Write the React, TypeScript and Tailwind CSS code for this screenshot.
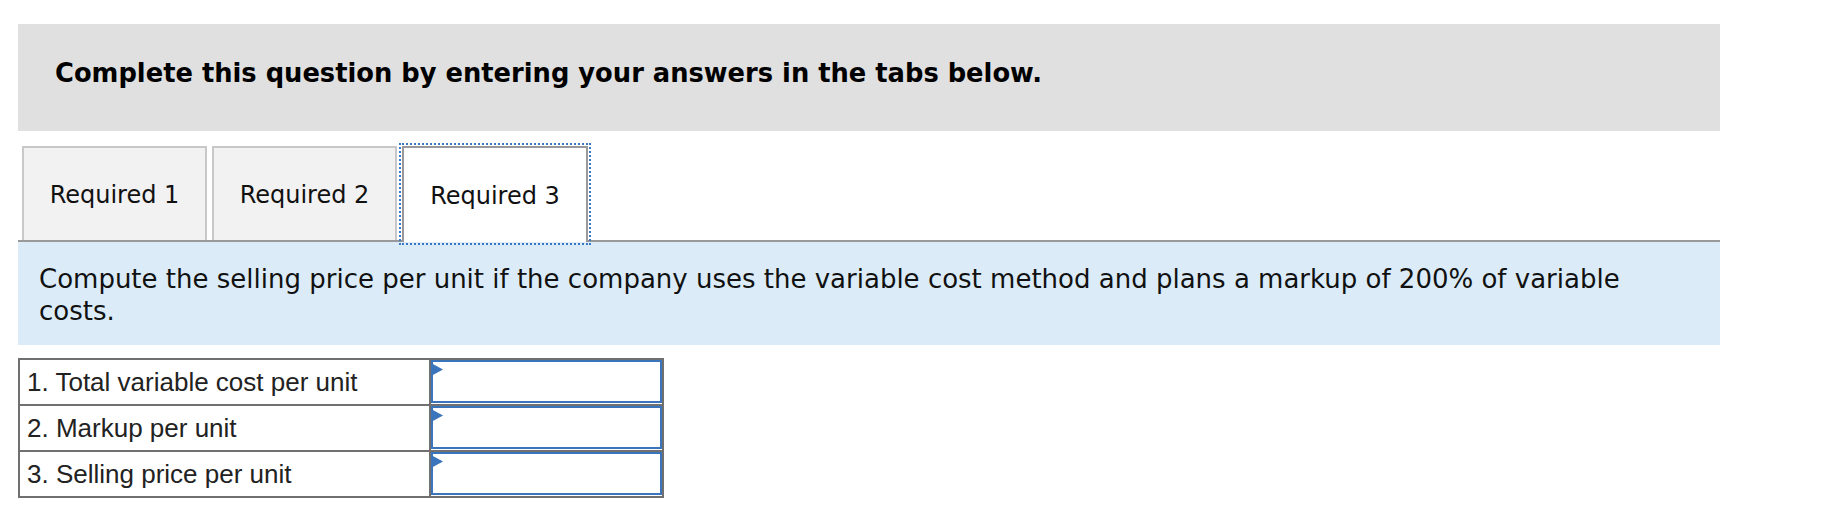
import { useState } from 'react'

// Tabbed homework question, "Required 3" open.

const TABS = ['Required 1', 'Required 2', 'Required 3']

const ROWS = [
  '1. Total variable cost per unit',
  '2. Markup per unit',
  '3. Selling price per unit',
]

function Flag() {
  return (
    <svg
      aria-hidden
      width="12"
      height="13"
      viewBox="0 0 12 13"
      className="pointer-events-none absolute left-0 top-[3px]"
    >
      <path d="M0 0 L12 6.5 L0 13 Z" fill="#3a74bb" />
    </svg>
  )
}

export default function App() {
  const [active, setActive] = useState(2)
  const [values, setValues] = useState(['', '', ''])

  return (
    <div className="min-h-[510px] w-[1832px] bg-white pt-[24px] pl-[18px] font-['DejaVu_Sans',Verdana,sans-serif] text-black">
      <div className="w-[1702px]">
        <div className="h-[107px] bg-[#e0e0e0] pt-[30px] pl-[37px]">
          <h1 className="text-[25.75px] font-bold">
            Complete this question by entering your answers in the tabs below.
          </h1>
        </div>

        <div className="mt-[15px] flex h-[96px] gap-[5px] border-b-2 border-[#999999] pl-[4px]">
          {TABS.map((t, i) =>
            i === active ? (
              <button
                key={t}
                type="button"
                onClick={() => setActive(i)}
                className="h-[96px] w-[186px] border-2 border-b-0 border-[#999999] bg-white pt-[2px] text-[24px] text-[#111] outline-2 outline-offset-1 outline-dotted outline-[#3b78c4]"
              >
                {t}
              </button>
            ) : (
              <button
                key={t}
                type="button"
                onClick={() => setActive(i)}
                className="h-[94px] w-[185px] border-2 border-b-0 border-[#c8c8c8] bg-[#f2f2f2] pt-[2px] text-[24px] text-[#111]"
              >
                {t}
              </button>
            ),
          )}
        </div>

        <div className="bg-[#dbecf8] pt-[21px] pb-[18px] pl-[21px] pr-[60px] text-[26px] leading-[32px] text-[#111]">
          Compute the selling price per unit if the company uses the variable cost method and plans a
          markup of 200% of variable costs.
        </div>

        <table className="mt-[13px] w-[646px] border-collapse border-2 border-[#707070] font-['Liberation_Sans',Arial,sans-serif] text-[26px] text-[#222]">
          <tbody>
            {ROWS.map((r, i) => (
              <tr key={r} className="h-[46px]">
                <td className="w-[411px] border-2 border-[#707070] pl-[7px] align-middle">{r}</td>
                <td className="relative border-2 border-[#707070] p-0 pb-[1px]">
                  <input
                    value={values[i]}
                    onChange={(e) =>
                      setValues((v) => v.map((x, j) => (j === i ? e.target.value : x)))
                    }
                    className="block h-[43px] w-full border-2 border-[#3a74bb] bg-white px-2 text-right text-[24px] outline-none"
                  />
                  <Flag />
                </td>
              </tr>
            ))}
          </tbody>
        </table>
      </div>
    </div>
  )
}
